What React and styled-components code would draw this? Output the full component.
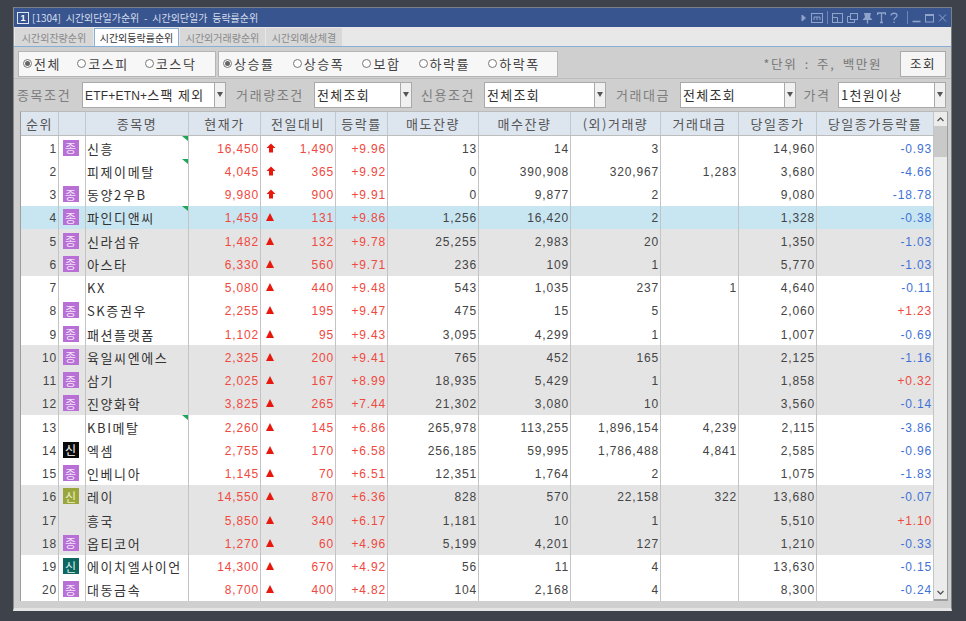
import React from 'react';
import styled, { createGlobalStyle } from 'styled-components';

const KR = '"Noto Sans CJK KR", "Liberation Sans", sans-serif';
const NUM = '"Liberation Sans", "Noto Sans CJK KR", sans-serif';

const GlobalStyle = createGlobalStyle`
    html, body {
        margin: 0;
        padding: 0;
        background: #3e424a;
    }
    * {
        box-sizing: border-box;
    }
`;

const Page = styled.div`
    width: 966px;
    height: 621px;
    padding: 7px 0 0 13px;
    background: #3e424a;
    overflow: hidden;
    font-family: ${KR};
`;

const Window = styled.div`
    width: 939px;
    height: 604px;
    display: flex;
    flex-direction: column;
    background: #cfcfcf;
    border: 1px solid #7b7f86;
    border-bottom: 3px solid #e4e4e4;
    border-left-color: #8b8b8b;
`;

const TitleBar = styled.div`
    height: 19px;
    flex: none;
    display: flex;
    align-items: center;
    padding: 0 4px 0 3px;
    background: #38558f;
    color: #d5dded;
    font-size: 10px;
    word-spacing: 2.5px;
    white-space: pre;
`;

const WinNumber = styled.span`
    width: 12px;
    height: 12px;
    margin-right: 3px;
    display: flex;
    align-items: center;
    justify-content: center;
    border: 1px solid #dfe6f2;
    font: bold 9px ${NUM};
    color: #fff;
`;

const TitleText = styled.span`
    flex: 1;
`;

const TitleIcons = styled.div`
    display: flex;
    align-items: center;
    gap: 4px;
    color: #8fa3cb;
`;

const Divider = styled.span`
    width: 1px;
    height: 13px;
    margin-left: ${p => p.$left || 0}px;
    background: #6f87b5;
`;

const TabBar = styled.div`
    height: 20px;
    flex: none;
    display: flex;
    align-items: flex-end;
    padding-left: 1px;
    gap: 1px;
    background: #e8e8e8;
    border-bottom: 1px solid #88b0d6;
`;

const Tab = styled.div`
    width: ${p => p.$w}px;
    height: 18px;
    display: flex;
    align-items: center;
    justify-content: center;
    font-size: 10px;
    color: ${p => (p.$active ? '#333' : '#8a8a8a')};
    background: ${p => (p.$active ? '#fff' : '#d8d8d8')};
    border: 1px solid ${p => (p.$active ? '#88b0d6' : '#d8d8d8')};
    border-bottom: none;
`;

const Toolbar = styled.div`
    height: 32px;
    flex: none;
    display: flex;
    align-items: center;
    gap: 2px;
    padding: 2px 5px 0 4px;
    border-bottom: 1px solid #bdbdbd;
`;

const RadioBox = styled.div`
    width: ${p => p.$w}px;
    height: 26px;
    display: flex;
    align-items: center;
    gap: ${p => p.$gap}px;
    padding-left: 4px;
    background: #f7f7f7;
    border: 1px solid #b5b5b5;
`;

const RadioItem = styled.label`
    display: flex;
    align-items: center;
    gap: 2px;
    font-size: 13px;
    letter-spacing: 1.6px;
    color: #444;
`;

const RadioMark = styled.span`
    width: 9px;
    height: 9px;
    flex: none;
    display: flex;
    align-items: center;
    justify-content: center;
    border: 1px solid #777;
    border-radius: 50%;
    background: #fff;

    &::after {
        content: '';
        width: 5px;
        height: 5px;
        border-radius: 50%;
        background: ${p => (p.$on ? '#666' : 'transparent')};
    }
`;

const UnitText = styled.span`
    margin-left: auto;
    margin-right: 16px;
    font-size: 12.5px;
    letter-spacing: 1.6px;
    word-spacing: 3px;
    color: #777;
`;

const SearchButton = styled.button`
    width: 46px;
    height: 26px;
    padding: 0;
    font-family: ${KR};
    font-size: 12.5px;
    letter-spacing: 1.6px;
    color: #333;
    background: #f5f5f5;
    border: 1px solid #a9a9a9;
`;

const FilterRow = styled.div`
    height: 32px;
    flex: none;
    display: grid;
    grid-template-columns: 65px 144px 88px 98px 72px 122px 74px 116px 42px 108px;
    align-items: center;
    padding: 1px 0 2px 3px;
`;

const FilterLabel = styled.span`
    text-align: ${p => (p.$lead ? 'left' : 'center')};
    font-size: 13px;
    letter-spacing: 1.6px;
    color: #7d7d7d;
    white-space: nowrap;
`;

const Select = styled.div`
    height: 26px;
    display: flex;
    align-items: center;
    justify-content: space-between;
    padding-left: 2px;
    background: #fff;
    border: 1px solid #a9a9a9;
    font-size: 13px;
    letter-spacing: 1.3px;
    color: #333;
    white-space: pre;
`;

const SelectLatin = styled.span`
    font-family: ${NUM};
    font-size: 12px;
    letter-spacing: 0.2px;
`;

const SelectArrow = styled.span`
    width: 11px;
    height: 24px;
    flex: none;
    display: flex;
    align-items: center;
    justify-content: center;
    background: #f0f0f0;
    border-left: 1px solid #a9a9a9;

    &::after {
        content: '';
        border-style: solid;
        border-width: 5px 3px 0;
        border-color: #555 transparent transparent;
    }
`;

const TableFrame = styled.div`
    width: 928px;
    height: 490px;
    margin: 0 0 0 6px;
    flex: none;
    display: flex;
    background: #fff;
    border: 1px solid #9d9d9d;
    border-top-color: #bbb;
    border-bottom: 2px solid #9d9d9d;
`;

const TableBody = styled.div`
    width: 913px;
    flex: none;
`;

const COLUMNS = '38px 27px 103px 72px 75px 52px 91px 92px 90px 78px 78px 117px';

const HeaderRow = styled.div`
    height: 24px;
    display: grid;
    grid-template-columns: ${COLUMNS};
    background: #dde5ef;
    border-bottom: 1px solid #bdbdbd;
`;

const HeaderCell = styled.div`
    display: flex;
    align-items: center;
    justify-content: center;
    font-size: 13px;
    letter-spacing: 1.5px;
    color: #555;
    white-space: nowrap;
    border-right: 1px solid #c2c8d0;
`;

const ROW_BG = { white: '#fff', gray: '#e4e4e4', blue: '#c8e6f2' };

const Row = styled.div`
    height: 23.25px;
    display: grid;
    grid-template-columns: ${COLUMNS};
    background: ${p => ROW_BG[p.$tone]};
`;

const Cell = styled.div`
    position: relative;
    display: flex;
    align-items: center;
    justify-content: ${p => p.$justify || 'flex-end'};
    padding: 2px 1px 0 0;
    font-family: ${NUM};
    font-size: 12px;
    letter-spacing: 0.85px;
    color: ${p => p.$color || '#444'};
    white-space: nowrap;
    border-right: 1px solid #c4c4c4;
`;

const NameCell = styled(Cell)`
    padding: 1px 0 0 1px;
    font-family: ${KR};
    font-size: 13px;
    letter-spacing: 1.6px;
    color: #333;
`;

const DiffCell = styled(Cell)`
    padding-left: 5px;

    svg {
        margin-top: -2px;
    }
`;

const Flag = styled.span`
    position: absolute;
    top: 0;
    right: 0;
    border-style: solid;
    border-width: 0 6px 5px 0;
    border-color: transparent #1fa55a transparent transparent;
`;

const Badge = styled.span`
    width: 16px;
    height: 16px;
    margin: -2px 2px 0 0;
    display: flex;
    align-items: center;
    justify-content: center;
    font-family: ${KR};
    font-size: 12px;
    letter-spacing: 0;
    color: ${p => p.$fg};
    background: ${p => p.$bg};
`;

const Scrollbar = styled.div`
    flex: 1;
    display: flex;
    flex-direction: column;
    background: #ececec;
`;

const ScrollArrow = styled.div`
    height: ${p => p.$h}px;
    flex: none;
    display: flex;
    align-items: center;
    justify-content: center;
    color: #555;
`;

const ScrollThumb = styled.div`
    height: 31px;
    flex: none;
    background: #c9c9c9;
`;

const ScrollGap = styled.div`
    flex: 1;
`;

const UpArrow = () => (
    <svg width="10" height="10" viewBox="0 0 10 10">
        <path d="M5 0.5 L9.5 5 L7 5 L7 9.5 L3 9.5 L3 5 L0.5 5 Z" fill="#e8190c" />
    </svg>
);

const Triangle = () => (
    <svg width="8" height="8" viewBox="0 0 8 8">
        <path d="M4 0 L8 8 L0 8 Z" fill="#e8190c" />
    </svg>
);

const Chevron = ({ down }) => (
    <svg width="7" height="5" viewBox="0 0 7 5" fill="none" stroke="currentColor" strokeWidth="1.3">
        <path d={down ? 'M0.5 1 L3.5 4 L6.5 1' : 'M0.5 4 L3.5 1 L6.5 4'} />
    </svg>
);

const Ico = ({ w = 12, children }) => (
    <svg width={w} height="12" viewBox={`0 0 ${w} 12`} fill="none" stroke="currentColor" strokeWidth="1">
        {children}
    </svg>
);

const BADGES = {
    j: { label: '종', bg: '#b86fd6', fg: '#f3e3fa' },
    k: { label: '신', bg: '#0a0a0a', fg: '#fff' },
    o: { label: '신', bg: '#9aa63c', fg: '#eef2c8' },
    t: { label: '신', bg: '#0d6660', fg: '#d8f2ee' },
};

// rank is the index + 1
const STOCKS = [
    ['j', '신흥', '16,450', 'U', '1,490', '+9.96', '13', '14', '3', '', '14,960', '-0.93', 1],
    ['', '피제이메탈', '4,045', 'U', '365', '+9.92', '0', '390,908', '320,967', '1,283', '3,680', '-4.66', 1],
    ['j', '동양2우B', '9,980', 'U', '900', '+9.91', '0', '9,877', '2', '', '9,080', '-18.78', 0],
    ['j', '파인디앤씨', '1,459', 'T', '131', '+9.86', '1,256', '16,420', '2', '', '1,328', '-0.38', 1],
    ['j', '신라섬유', '1,482', 'T', '132', '+9.78', '25,255', '2,983', '20', '', '1,350', '-1.03', 0],
    ['j', '아스타', '6,330', 'T', '560', '+9.71', '236', '109', '1', '', '5,770', '-1.03', 0],
    ['', 'KX', '5,080', 'T', '440', '+9.48', '543', '1,035', '237', '1', '4,640', '-0.11', 0],
    ['j', 'SK증권우', '2,255', 'T', '195', '+9.47', '475', '15', '5', '', '2,060', '+1.23', 0],
    ['j', '패션플랫폼', '1,102', 'T', '95', '+9.43', '3,095', '4,299', '1', '', '1,007', '-0.69', 0],
    ['j', '육일씨엔에스', '2,325', 'T', '200', '+9.41', '765', '452', '165', '', '2,125', '-1.16', 0],
    ['j', '삼기', '2,025', 'T', '167', '+8.99', '18,935', '5,429', '1', '', '1,858', '+0.32', 0],
    ['j', '진양화학', '3,825', 'T', '265', '+7.44', '21,302', '3,080', '10', '', '3,560', '-0.14', 0],
    ['', 'KBI메탈', '2,260', 'T', '145', '+6.86', '265,978', '113,255', '1,896,154', '4,239', '2,115', '-3.86', 1],
    ['k', '엑셈', '2,755', 'T', '170', '+6.58', '256,185', '59,995', '1,786,488', '4,841', '2,585', '-0.96', 0],
    ['j', '인베니아', '1,145', 'T', '70', '+6.51', '12,351', '1,764', '2', '', '1,075', '-1.83', 0],
    ['o', '레이', '14,550', 'T', '870', '+6.36', '828', '570', '22,158', '322', '13,680', '-0.07', 0],
    ['', '흥국', '5,850', 'T', '340', '+6.17', '1,181', '10', '1', '', '5,510', '+1.10', 0],
    ['j', '옵티코어', '1,270', 'T', '60', '+4.96', '5,199', '4,201', '127', '', '1,210', '-0.33', 0],
    ['t', '에이치엘사이언', '14,300', 'T', '670', '+4.92', '56', '11', '4', '', '13,630', '-0.15', 0],
    ['j', '대동금속', '8,700', 'T', '400', '+4.82', '104', '2,168', '4', '', '8,300', '-0.24', 0],
];

const HEADERS = ['순위', '', '종목명', '현재가', '전일대비', '등락률', '매도잔량', '매수잔량', '(외)거래량', '거래대금', '당일종가', '당일종가등락률'];

const RED = '#f0483e';
const BLUE = '#3f72d8';

const rowTone = i => {
    if (i === 3) return 'blue';
    return Math.floor(i / 3) % 2 ? 'gray' : 'white';
};

const App = () => (
    <Page>
        <GlobalStyle />
        <Window>
            <TitleBar>
                <WinNumber>1</WinNumber>
                <TitleText>[1304] 시간외단일가순위 - 시간외단일가 등락률순위</TitleText>
                <TitleIcons>
                    <Ico w={6}><path d="M1 3 L4.5 6 L1 9 Z" fill="currentColor" /></Ico>
                    <Ico w={12}>
                        <rect x="0.5" y="1.5" width="11" height="9" />
                        <path d="M3 8 V5 H9 V8 M6 5 V8" />
                    </Ico>
                    <Divider />
                    <Ico w={11}>
                        <rect x="0.5" y="1.5" width="10" height="9" />
                        <path d="M0.5 5.5 H5.5 V10.5" />
                    </Ico>
                    <Ico w={11}>
                        <rect x="3.5" y="1.5" width="7" height="6" />
                        <path d="M3.5 4.5 H0.5 V10.5 H7.5 V7.5" />
                    </Ico>
                    <Ico w={11}>
                        <path d="M2 1 H9 L8 5 L10.5 8 H0.5 L3 5 Z" fill="currentColor" stroke="none" />
                        <path d="M5.5 8 V11.5" strokeWidth="1.4" />
                    </Ico>
                    <Ico w={9}>
                        <path d="M0.5 3 V1 H8.5 V3 M4.5 1 V10.5 M3 10.5 H6" strokeWidth="1.3" />
                    </Ico>
                    <Ico w={8}>
                        <path d="M1 3.5 C1 0.5 7 0.5 7 3.5 C7 5.5 4 5.5 4 8 M4 9.5 V11" strokeWidth="1.3" />
                    </Ico>
                    <Divider $left={5} />
                    <Ico w={9}><path d="M0.5 9.5 H8.5" strokeWidth="1.6" /></Ico>
                    <Ico w={9}>
                        <rect x="0.5" y="2.5" width="8" height="7.5" />
                        <path d="M0.5 3.5 H8.5" />
                    </Ico>
                    <Ico w={9}><path d="M1 2.5 L8 9.5 M8 2.5 L1 9.5" /></Ico>
                </TitleIcons>
            </TitleBar>
            <TabBar>
                <Tab $w={78}>시간외잔량순위</Tab>
                <Tab $w={85} $active>시간외등락률순위</Tab>
                <Tab $w={85}>시간외거래량순위</Tab>
                <Tab $w={76}>시간외예상체결</Tab>
            </TabBar>
            <Toolbar>
                <RadioBox $w={198} $gap={16}>
                    <RadioItem><RadioMark $on />전체</RadioItem>
                    <RadioItem><RadioMark />코스피</RadioItem>
                    <RadioItem><RadioMark />코스닥</RadioItem>
                </RadioBox>
                <RadioBox $w={340} $gap={18}>
                    <RadioItem><RadioMark $on />상승률</RadioItem>
                    <RadioItem><RadioMark />상승폭</RadioItem>
                    <RadioItem><RadioMark />보합</RadioItem>
                    <RadioItem><RadioMark />하락률</RadioItem>
                    <RadioItem><RadioMark />하락폭</RadioItem>
                </RadioBox>
                <UnitText>*단위 : 주, 백만원</UnitText>
                <SearchButton>조회</SearchButton>
            </Toolbar>
            <FilterRow>
                <FilterLabel $lead>종목조건</FilterLabel>
                <Select><span><SelectLatin>ETF+ETN+</SelectLatin>스팩 제외</span><SelectArrow /></Select>
                <FilterLabel>거래량조건</FilterLabel>
                <Select>전체조회<SelectArrow /></Select>
                <FilterLabel>신용조건</FilterLabel>
                <Select>전체조회<SelectArrow /></Select>
                <FilterLabel>거래대금</FilterLabel>
                <Select>전체조회<SelectArrow /></Select>
                <FilterLabel>가격</FilterLabel>
                <Select>1천원이상<SelectArrow /></Select>
            </FilterRow>
            <TableFrame>
                <TableBody>
                    <HeaderRow>
                        {HEADERS.map((h, i) => <HeaderCell key={i}>{h}</HeaderCell>)}
                    </HeaderRow>
                    {STOCKS.map((s, i) => {
                        const badge = BADGES[s[0]];
                        return (
                            <Row key={i} $tone={rowTone(i)}>
                                <Cell>{i + 1}</Cell>
                                <Cell $justify="center">
                                    {badge && <Badge $bg={badge.bg} $fg={badge.fg}>{badge.label}</Badge>}
                                </Cell>
                                <NameCell $justify="flex-start">
                                    {s[1]}
                                    {s[12] === 1 && <Flag />}
                                </NameCell>
                                <Cell $color={RED}>{s[2]}</Cell>
                                <DiffCell $justify="space-between" $color={RED}>
                                    {s[3] === 'U' ? <UpArrow /> : <Triangle />}
                                    <span>{s[4]}</span>
                                </DiffCell>
                                <Cell $color={RED}>{s[5]}</Cell>
                                <Cell>{s[6]}</Cell>
                                <Cell>{s[7]}</Cell>
                                <Cell>{s[8]}</Cell>
                                <Cell>{s[9]}</Cell>
                                <Cell>{s[10]}</Cell>
                                <Cell $color={s[11][0] === '+' ? RED : BLUE}>{s[11]}</Cell>
                            </Row>
                        );
                    })}
                </TableBody>
                <Scrollbar>
                    <ScrollArrow $h={14}><Chevron /></ScrollArrow>
                    <ScrollThumb />
                    <ScrollGap />
                    <ScrollArrow $h={14}><Chevron down /></ScrollArrow>
                </Scrollbar>
            </TableFrame>
        </Window>
    </Page>
);

export default App;
